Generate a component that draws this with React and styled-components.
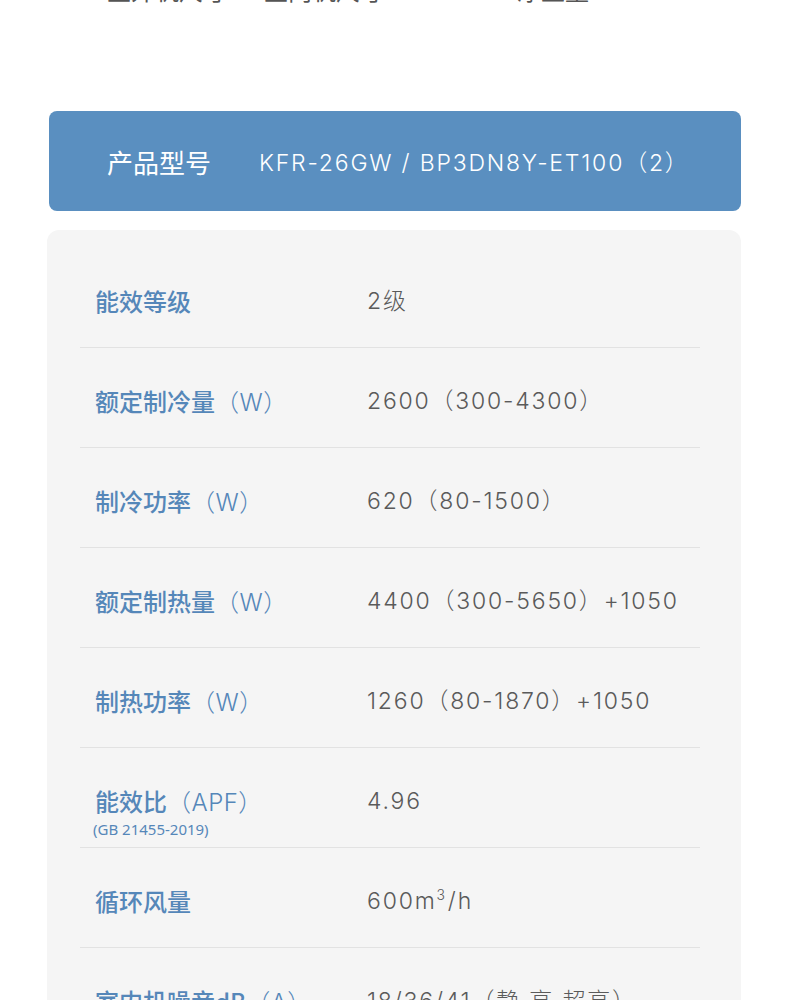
import React from "react";
import styled, { createGlobalStyle } from "styled-components";

const Global = createGlobalStyle`
  html, body { margin: 0; padding: 0; background: #ffffff; }
  body { font-family: "Noto Sans", "Noto Sans CJK SC", sans-serif; }
`;

const Page = styled.div`
  width: 790px;
  padding: 0 49px 40px 47px;
  box-sizing: border-box;
  overflow: hidden;
`;

const TabStrip = styled.div`
  display: flex;
  height: 6px;
  overflow: hidden;
  margin-bottom: 105px;
`;

const TabText = styled.div`
  margin-top: -26px;
  margin-left: ${(p) => p.$ml}px;
  font-family: "Noto Sans CJK SC", sans-serif;
  font-size: 24px;
  line-height: 32px;
  color: #555;
  white-space: nowrap;
`;

const ModelBar = styled.div`
  margin: 0 0 0 2px;
  height: 100px;
  border-radius: 8px;
  background: #5a8fc0;
  display: flex;
  align-items: center;
  padding-left: 58px;
  color: #fff;
  box-sizing: border-box;
`;

const ModelLabel = styled.div`
  font-family: "Noto Sans CJK SC", sans-serif;
  font-size: 26px;
  font-weight: 400;
  width: 152px;
`;

const ModelValue = styled.div`
  font-family: Inter, "Noto Sans CJK SC", sans-serif;
  font-weight: 300;
  font-size: 23px;
  letter-spacing: 1.8px;
`;

const Card = styled.div`
  margin-top: 19px;
  background: #f5f5f5;
  border-radius: 12px;
  padding: 18px 41px 0 33px;
`;

const Row = styled.div`
  display: grid;
  grid-template-columns: 287px 1fr;
  height: 100px;
  box-sizing: border-box;
  padding-top: 37px;
  border-bottom: 1px solid #e2e2e2;
`;

const LabelCell = styled.div`
  padding-left: 15px;
`;

const Label = styled.div`
  font-family: "Noto Sans CJK SC", sans-serif;
  font-size: 24px;
  line-height: 32px;
  font-weight: 500;
  color: #5587b9;
  white-space: nowrap;
`;

const Unit = styled.span`
  font-family: Inter, "Noto Sans CJK SC", sans-serif;
  font-weight: 300;
  letter-spacing: 0.5px;
`;

const SubLabel = styled.div`
  margin-left: -2px;
  margin-top: 1px;
  font-family: "Noto Sans", sans-serif;
  font-size: 15px;
  line-height: 18px;
  font-weight: 400;
  color: #5587b9;
`;

const Value = styled.div`
  font-family: Inter, "Noto Sans CJK SC", sans-serif;
  font-size: 23px;
  line-height: 32px;
  font-weight: 300;
  letter-spacing: 1.8px;
  color: #5a5a5a;
  white-space: nowrap;

  sup {
    font-size: 14px;
    line-height: 0;
    vertical-align: 0;
    position: relative;
    top: -9px;
    margin: 0 1px 0 0;
  }
`;

const rows = [
  { label: "能效等级", value: "2级" },
  { label: "额定制冷量", unit: "（W）", value: "2600（300-4300）" },
  { label: "制冷功率", unit: "（W）", value: "620（80-1500）" },
  { label: "额定制热量", unit: "（W）", value: "4400（300-5650）+1050" },
  { label: "制热功率", unit: "（W）", value: "1260（80-1870）+1050" },
  { label: "能效比", unit: "（APF）", sub: "(GB 21455-2019)", value: "4.96" },
  { label: "循环风量", value: "air" },
  { label: "室内机噪音dB", unit: "（A）", value: "18/36/41（静 高 超高）" },
  { label: "室外机噪音dB", unit: "（A）", value: "≤50" },
];

export default function App() {
  return (
    <>
      <Global />
      <Page>
        <TabStrip>
          <TabText $ml={60}>室外机尺寸</TabText>
          <TabText $ml={37}>室内机尺寸</TabText>
          <TabText $ml={133}>净重量</TabText>
        </TabStrip>
        <ModelBar>
          <ModelLabel>产品型号</ModelLabel>
          <ModelValue>KFR-26GW / BP3DN8Y-ET100（2）</ModelValue>
        </ModelBar>
        <Card>
          {rows.map((r) => (
            <Row key={r.label}>
              <LabelCell>
                <Label>
                  {r.label}
                  {r.unit && <Unit>{r.unit}</Unit>}
                </Label>
                {r.sub && <SubLabel>{r.sub}</SubLabel>}
              </LabelCell>
              <Value>
                {r.value === "air" ? (
                  <>
                    600m<sup>3</sup>/h
                  </>
                ) : (
                  r.value
                )}
              </Value>
            </Row>
          ))}
        </Card>
      </Page>
    </>
  );
}
